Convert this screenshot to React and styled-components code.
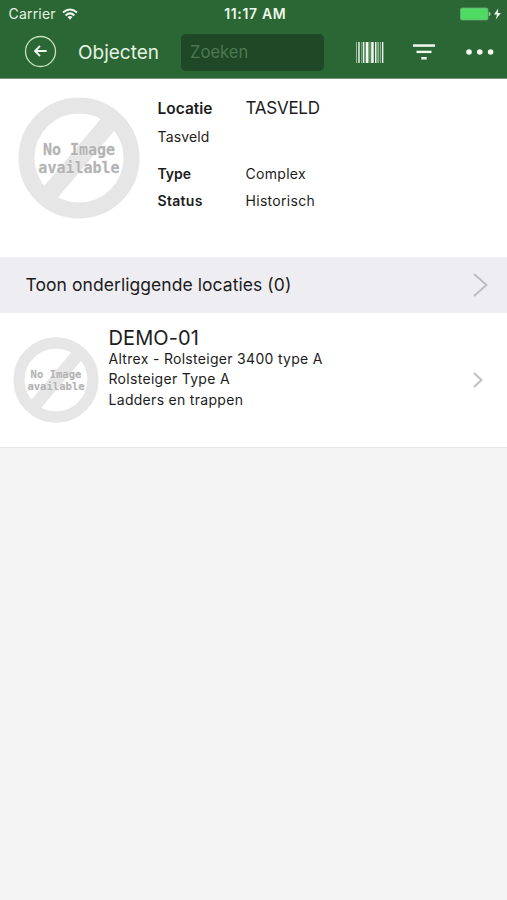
import React from "react";
import styled, { createGlobalStyle } from "styled-components";

const GlobalStyle = createGlobalStyle`
  * { box-sizing: border-box; }
  body {
    margin: 0;
    background: #f4f4f4;
    font-family: Inter, "Liberation Sans", sans-serif;
    color: #1c1c1c;
  }
`;

const Screen = styled.div`
  display: flex;
  flex-direction: column;
  width: 507px;
  height: 900px;
  background: #f4f4f4;
  overflow: hidden;
`;

const Header = styled.header`
  height: 79px;
  background: #2a6734;
  border-bottom: 1px solid #719b76;
  color: #e6f2e2;
`;

const StatusBar = styled.div`
  display: grid;
  grid-template-columns: 1fr auto 1fr;
  align-items: center;
  height: 27px;
  padding: 0 5px 0 8.5px;
`;

const Carrier = styled.div`
  display: flex;
  align-items: center;
  gap: 6px;
  font-size: 14px;
  line-height: 27px;
  letter-spacing: 0.2px;
`;

const Clock = styled.div`
  padding-top: 1px;
  font-size: 14px;
  font-weight: 600;
  line-height: 26px;
  letter-spacing: 0.65px;
  color: #edf7ea;
`;

const Battery = styled.div`
  display: flex;
  justify-content: flex-end;
`;

const NavBar = styled.nav`
  display: flex;
  align-items: center;
  height: 50px;
  padding: 0 12px 0 24px;
`;

const IconButton = styled.button`
  display: flex;
  padding: 0 0 ${(p) => p.$lift || 0}px;
  border: 0;
  background: none;
  color: #f2faf0;
  margin-left: ${(p) => p.$gap || 0}px;
`;

const Title = styled.h1`
  width: 103px;
  margin: 1px 0 0 21px;
  font-size: 19px;
  font-weight: 400;
  line-height: 26px;
  letter-spacing: 0;
`;

const Search = styled.input`
  width: 143px;
  height: 37px;
  padding: 0 9px 1px;
  border: 0;
  border-radius: 5px;
  background: #1e4826;
  color: #e6f2e2;
  font: 400 16.6px Inter, sans-serif;
  outline: 0;
  &::placeholder {
    color: #4d7852;
    opacity: 1;
  }
`;

const Summary = styled.section`
  display: flex;
  height: 178px;
  padding: 18px 18px 0;
  background: #fff;
`;

const Details = styled.div`
  display: grid;
  grid-template-columns: 88px auto;
  grid-template-rows: 28px 37px 27px 27px;
  align-content: start;
  margin: -2px 0 0 17.5px;
`;

const Text = styled.span`
  font-size: ${(p) => p.$size || 14}px;
  font-weight: ${(p) => (p.$strong ? 600 : 400)};
  letter-spacing: ${(p) => p.$track ?? 0.3}px;
  line-height: ${(p) => p.$line || 27}px;
  white-space: nowrap;
`;

const Wide = styled(Text)`
  grid-column: 1 / -1;
`;

const SubLocations = styled.section`
  display: flex;
  align-items: center;
  justify-content: space-between;
  height: 56px;
  padding: 0 19px 1px 25.5px;
  background: #eeedf2;
`;

const ObjectRow = styled.article`
  display: flex;
  height: 135px;
  padding: 24px 24px 0 12.5px;
  border-bottom: 1px solid #e4e4e4;
  background: #fff;
`;

const ObjectText = styled.div`
  display: flex;
  flex: 1;
  flex-direction: column;
  margin: -11px 0 0 10px;
`;

const RowEnd = styled.div`
  display: flex;
  align-items: center;
  height: 85px;
`;

const Drawing = styled.svg`
  display: block;
  flex: none;
`;

const PlaceholderText = styled.text`
  font: 700 15px "DejaVu Sans Mono", monospace;
  fill: #b3b3b3;
  stroke: #eeeeee;
  stroke-width: 0.8px;
  paint-order: stroke;
  text-anchor: middle;
`;

function NoImage({ size }) {
  return (
    <Drawing width={size} height={size} viewBox="0 0 122 122">
      <g fill="none" stroke="#e6e6e6">
        <circle cx="61" cy="61" r="52.5" strokeWidth="16" />
        <path d="M91 26 32 96" strokeWidth="18" />
      </g>
      <PlaceholderText x="61" y="58">No Image</PlaceholderText>
      <PlaceholderText x="61" y="75.5">available</PlaceholderText>
    </Drawing>
  );
}

function WifiIcon() {
  return (
    <Drawing width="16" height="12" viewBox="0 0 16 12">
      <g fill="none" stroke="#f0f8ed" strokeWidth="2">
        <path d="M1 4.6Q8-1.6 15 4.6" />
        <path d="M3.6 7.4Q8 3.4 12.4 7.4" />
      </g>
      <path d="M5.5 9Q8 7 10.5 9L8 11.7Z" fill="#f0f8ed" />
    </Drawing>
  );
}

function BatteryIcon() {
  return (
    <Drawing width="42" height="14" viewBox="0 0 42 14">
      <rect x=".5" y="1" width="27.5" height="12" rx="1.5" fill="#4fda63" stroke="#72a878" strokeWidth=".8" />
      <path d="M28.8 5q1.8 0 1.8 2t-1.8 2z" fill="#a5cda6" />
      <path d="M38.3 1.5 34 7.6h3l-1.2 4.9 5-6.4h-3.1z" fill="#f2faf0" />
    </Drawing>
  );
}

function BackIcon() {
  return (
    <Drawing width="33" height="33" viewBox="0 0 33 33" fill="none">
      <circle cx="16.5" cy="16.5" r="15" stroke="#c5e2b9" strokeWidth="1.3" />
      <path d="M22.7 16H11.2M16 11l-5 5 5 5" stroke="#f0f8ed" strokeWidth="1.8" />
    </Drawing>
  );
}

const BARS = [
  [0, 0.8, 0.7], [2, 1.9, 0.75], [5, 0.8, 0.5], [6.8, 1.6, 0.95],
  [9.7, 2.8, 1], [13.6, 0.8, 0.6], [15.2, 2.5, 1], [19, 1.5, 0.95],
  [21.3, 1.8, 0.5], [23.9, 1.2, 0.5], [26, 1.4, 0.95],
];

function BarcodeIcon() {
  return (
    <Drawing width="28" height="21" viewBox="0 0 28 21">
      {BARS.map(([x, width, opacity]) => (
        <rect key={x} x={x} y="0" width={width} height="21" fill="#f2faf0" opacity={opacity} />
      ))}
    </Drawing>
  );
}

function FilterIcon() {
  return (
    <Drawing width="22" height="16" viewBox="0 0 22 16" fill="#f2faf0">
      <rect y=".3" width="22" height="2.5" />
      <rect x="3.5" y="6.7" width="15" height="2.4" />
      <rect x="8.3" y="13" width="5.4" height="2.5" />
    </Drawing>
  );
}

function MoreIcon() {
  return (
    <Drawing width="28" height="6" viewBox="0 0 28 6" fill="#f2faf0">
      <circle cx="3" cy="3" r="2.8" />
      <circle cx="13.8" cy="3" r="2.8" />
      <circle cx="24.6" cy="3" r="2.8" />
    </Drawing>
  );
}

function Chevron({ width, height, weight }) {
  return (
    <Drawing width={width} height={height} fill="none">
      <path
        d={`M1 1 ${width - 1.5} ${height / 2} 1 ${height - 1}`}
        stroke="#bcbcc0"
        strokeWidth={weight}
      />
    </Drawing>
  );
}

export default function App() {
  return (
    <Screen>
      <GlobalStyle />
      <Header>
        <StatusBar>
          <Carrier>
            Carrier
            <WifiIcon />
          </Carrier>
          <Clock>11:17 AM</Clock>
          <Battery>
            <BatteryIcon />
          </Battery>
        </StatusBar>
        <NavBar>
          <IconButton $lift={2} aria-label="Terug">
            <BackIcon />
          </IconButton>
          <Title>Objecten</Title>
          <Search placeholder="Zoeken" />
          <IconButton $gap={32} aria-label="Barcode">
            <BarcodeIcon />
          </IconButton>
          <IconButton $gap={29} aria-label="Filter">
            <FilterIcon />
          </IconButton>
          <IconButton $gap={31} aria-label="Meer">
            <MoreIcon />
          </IconButton>
        </NavBar>
      </Header>

      <Summary>
        <NoImage size={122} />
        <Details>
          <Text $strong $size={15.5} $track={0}>Locatie</Text>
          <Text $size={17} $track={-0.25}>TASVELD</Text>
          <Wide $track={0.15}>Tasveld</Wide>
          <Text $strong $track={0}>Type</Text>
          <Text>Complex</Text>
          <Text $strong>Status</Text>
          <Text>Historisch</Text>
        </Details>
      </Summary>

      <SubLocations>
        <Text $size={17.5} $track={0.06}>Toon onderliggende locaties (0)</Text>
        <Chevron width={15} height={24} weight={1.8} />
      </SubLocations>

      <ObjectRow>
        <NoImage size={86} />
        <ObjectText>
          <Text $size={20} $line={24} $track={0.1}>DEMO-01</Text>
          <Text $line={17}>Altrex - Rolsteiger 3400 type A</Text>
          <Text $line={23}>Rolsteiger Type A</Text>
          <Text $line={20}>Ladders en trappen</Text>
        </ObjectText>
        <RowEnd>
          <Chevron width={10} height={16} weight={1.8} />
        </RowEnd>
      </ObjectRow>
    </Screen>
  );
}
